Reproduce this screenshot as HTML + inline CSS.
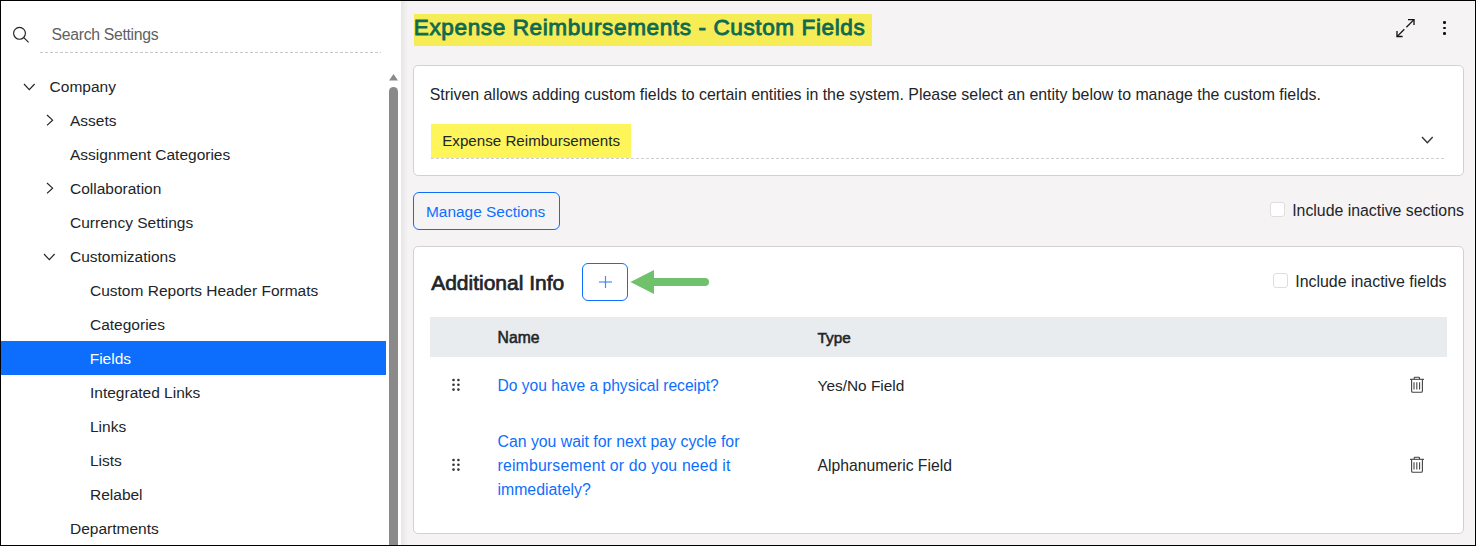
<!DOCTYPE html>
<html><head><meta charset="utf-8"><style>
html,body{margin:0;padding:0;}
body{width:1476px;height:546px;overflow:hidden;background:#000;position:relative;font-family:"Liberation Sans", sans-serif;}
.t{position:absolute;white-space:nowrap;font-family:"Liberation Sans", sans-serif;}
</style></head><body>
<div style="position:absolute;left:1px;top:1px;width:400px;height:544px;background:#fff"></div>
<svg style="position:absolute;left:0;top:0" width="40" height="50"><circle cx="19.5" cy="33.3" r="5.9" fill="none" stroke="#222" stroke-width="1.15"/><line x1="23.8" y1="37.6" x2="28.6" y2="42.4" stroke="#222" stroke-width="1.15"/></svg>
<div class="t" style="left:51.58px;top:26.53px;font-size:15.8px;line-height:15.8px;color:#5f5f5f;font-weight:400;letter-spacing:-0.32px">Search Settings</div>
<div style="position:absolute;left:40px;top:52px;width:341px;height:1px;background:repeating-linear-gradient(90deg,#c8c8c8 0 3px,transparent 3px 5px)"></div>
<svg style="position:absolute;left:21.90px;top:81.60px" width="14.6" height="9.6"><polyline points="2,2 7.3,7.6 12.6,2" fill="none" stroke="#222" stroke-width="1.15"/></svg>
<div class="t" style="left:49.60px;top:78.69px;font-size:15.5px;line-height:15.5px;color:#212529;font-weight:400;">Company</div>
<svg style="position:absolute;left:45.10px;top:112.90px" width="9.6" height="14.4"><polyline points="2,2 7.6,7.2 2,12.4" fill="none" stroke="#222" stroke-width="1.15"/></svg>
<div class="t" style="left:70.00px;top:112.69px;font-size:15.5px;line-height:15.5px;color:#212529;font-weight:400;">Assets</div>
<div class="t" style="left:70.00px;top:146.69px;font-size:15.5px;line-height:15.5px;color:#212529;font-weight:400;">Assignment Categories</div>
<svg style="position:absolute;left:45.10px;top:180.90px" width="9.6" height="14.4"><polyline points="2,2 7.6,7.2 2,12.4" fill="none" stroke="#222" stroke-width="1.15"/></svg>
<div class="t" style="left:70.00px;top:180.69px;font-size:15.5px;line-height:15.5px;color:#212529;font-weight:400;">Collaboration</div>
<div class="t" style="left:70.00px;top:214.69px;font-size:15.5px;line-height:15.5px;color:#212529;font-weight:400;">Currency Settings</div>
<svg style="position:absolute;left:41.90px;top:251.80px" width="14.6" height="9.6"><polyline points="2,2 7.3,7.6 12.6,2" fill="none" stroke="#222" stroke-width="1.15"/></svg>
<div class="t" style="left:70.00px;top:248.69px;font-size:15.5px;line-height:15.5px;color:#212529;font-weight:400;">Customizations</div>
<div class="t" style="left:90.00px;top:282.69px;font-size:15.5px;line-height:15.5px;color:#212529;font-weight:400;">Custom Reports Header Formats</div>
<div class="t" style="left:90.00px;top:316.69px;font-size:15.5px;line-height:15.5px;color:#212529;font-weight:400;">Categories</div>
<div style="position:absolute;left:1px;top:341px;width:385px;height:34px;background:#0d6efd"></div>
<div class="t" style="left:89.70px;top:350.69px;font-size:15.5px;line-height:15.5px;color:#fff;font-weight:400;">Fields</div>
<div class="t" style="left:90.00px;top:384.69px;font-size:15.5px;line-height:15.5px;color:#212529;font-weight:400;">Integrated Links</div>
<div class="t" style="left:90.00px;top:418.69px;font-size:15.5px;line-height:15.5px;color:#212529;font-weight:400;">Links</div>
<div class="t" style="left:90.00px;top:452.69px;font-size:15.5px;line-height:15.5px;color:#212529;font-weight:400;">Lists</div>
<div class="t" style="left:90.00px;top:486.69px;font-size:15.5px;line-height:15.5px;color:#212529;font-weight:400;">Relabel</div>
<div class="t" style="left:70.00px;top:520.69px;font-size:15.5px;line-height:15.5px;color:#212529;font-weight:400;">Departments</div>
<svg style="position:absolute;left:385px;top:70px" width="16" height="20"><polygon points="4,10.5 13,10.5 8.5,4" fill="#8a8a8a"/></svg>
<div style="position:absolute;left:389px;top:87px;width:9px;height:458px;background:#8a8a8a;border-radius:4.5px 4.5px 0 0"></div>
<div style="position:absolute;left:401px;top:1px;width:1074px;height:544px;background:#f5f3f4"></div>
<div style="position:absolute;left:401px;top:1px;width:7px;height:544px;background:linear-gradient(90deg,#e7e5e6,#f5f3f4)"></div>
<div style="position:absolute;left:414px;top:14px;width:458px;height:32px;background:#f6ec56"></div>
<div class="t" style="left:413.84px;top:16.88px;font-size:22.6px;line-height:22.6px;color:#0e6a50;font-weight:400;-webkit-text-stroke:0.85px #0e6a50;letter-spacing:0.58px">Expense Reimbursements - Custom Fields</div>
<svg style="position:absolute;left:1392px;top:15px" width="28" height="26"><g fill="none" stroke="#111" stroke-width="1.3"><path d="M16 4.6 H22 V9.9"/><path d="M22 4.6 L14.4 12.2"/><path d="M12.3 14.3 L5 21.6"/><path d="M5 16.1 V21.5 H10.6"/></g></svg>
<div style="position:absolute;left:1443.1px;top:21.3px;width:2.6px;height:2.6px;border-radius:50%;background:#111"></div>
<div style="position:absolute;left:1443.1px;top:26.7px;width:2.6px;height:2.6px;border-radius:50%;background:#111"></div>
<div style="position:absolute;left:1443.1px;top:32.3px;width:2.6px;height:2.6px;border-radius:50%;background:#111"></div>
<div style="position:absolute;left:413px;top:65px;width:1051px;height:111px;background:#fff;border:1px solid #d2d2d2;border-radius:5px;box-sizing:border-box"></div>
<div class="t" style="left:429.67px;top:86.65px;font-size:15.9px;line-height:15.9px;color:#212529;font-weight:400;">Striven allows adding custom fields to certain entities in the system. Please select an entity below to manage the custom fields.</div>
<div style="position:absolute;left:431px;top:124px;width:200px;height:34px;background:#fef55a"></div>
<div class="t" style="left:442.22px;top:133.17px;font-size:15.16px;line-height:15.16px;color:#212529;font-weight:400;">Expense Reimbursements</div>
<div style="position:absolute;left:431px;top:158px;width:1015px;height:1px;background:repeating-linear-gradient(90deg,#cfcfcf 0 3px,transparent 3px 5px)"></div>
<svg style="position:absolute;left:1419.65px;top:134.90px" width="14.7" height="9.8"><polyline points="2,2 7.35,7.8 12.7,2" fill="none" stroke="#333" stroke-width="1.4"/></svg>
<div style="position:absolute;left:413px;top:192px;width:147px;height:38px;border:1px solid #0d6efd;border-radius:6px;box-sizing:border-box"></div>
<div class="t" style="left:426.00px;top:203.73px;font-size:15.45px;line-height:15.45px;color:#0d6efd;font-weight:400;">Manage Sections</div>
<div style="position:absolute;left:1270px;top:202px;width:15px;height:15px;background:#fff;border:1px solid #dedede;border-radius:3px;box-sizing:border-box"></div>
<div class="t" style="left:1292.18px;top:202.59px;font-size:15.85px;line-height:15.85px;color:#212529;font-weight:400;">Include inactive sections</div>
<div style="position:absolute;left:413px;top:246px;width:1051px;height:288px;background:#fff;border:1px solid #d2d2d2;border-radius:5px;box-sizing:border-box"></div>
<div class="t" style="left:431.15px;top:271.83px;font-size:21px;line-height:21px;color:#212529;font-weight:400;-webkit-text-stroke:0.7px #212529">Additional Info</div>
<div style="position:absolute;left:582px;top:263px;width:46px;height:38px;border:1px solid #0d6efd;border-radius:6px;box-sizing:border-box"></div>
<svg style="position:absolute;left:596px;top:273px" width="19" height="18"><g stroke="#4a8af7" stroke-width="1.2"><line x1="3" y1="9" x2="16" y2="9"/><line x1="9.5" y1="3" x2="9.5" y2="15"/></g></svg>
<svg style="position:absolute;left:620px;top:260px" width="100" height="40"><polygon points="10.4,22 34,10 34,34" fill="#70c16b"/><line x1="33" y1="22.1" x2="85" y2="22.1" stroke="#70c16b" stroke-width="8" stroke-linecap="round"/></svg>
<div style="position:absolute;left:1273px;top:273px;width:15px;height:15px;background:#fff;border:1px solid #dedede;border-radius:3px;box-sizing:border-box"></div>
<div class="t" style="left:1295.27px;top:273.53px;font-size:15.92px;line-height:15.92px;color:#212529;font-weight:400;">Include inactive fields</div>
<div style="position:absolute;left:430px;top:317px;width:1017px;height:40px;background:#e9ecef"></div>
<div class="t" style="left:497.59px;top:329.92px;font-size:15.7px;line-height:15.7px;color:#212529;font-weight:400;-webkit-text-stroke:0.55px #212529">Name</div>
<div class="t" style="left:817.61px;top:330.26px;font-size:15.3px;line-height:15.3px;color:#212529;font-weight:400;-webkit-text-stroke:0.55px #212529">Type</div>
<svg style="position:absolute;left:449px;top:376.90px" width="14" height="16"><g fill="#333"><circle cx="4.5" cy="3" r="1.3"/><circle cx="4.5" cy="7.8" r="1.3"/><circle cx="4.5" cy="12.6" r="1.3"/><circle cx="9.4" cy="3" r="1.3"/><circle cx="9.4" cy="7.8" r="1.3"/><circle cx="9.4" cy="12.6" r="1.3"/></g></svg>
<div class="t" style="left:497.49px;top:377.99px;font-size:15.61px;line-height:15.61px;color:#0d6efd;font-weight:400;">Do you have a physical receipt?</div>
<div class="t" style="left:817.61px;top:378.18px;font-size:15.39px;line-height:15.39px;color:#212529;font-weight:400;">Yes/No Field</div>
<svg style="position:absolute;left:1409px;top:376px" width="16" height="18" viewBox="0 0 16 18"><g fill="none" stroke="#444" stroke-width="1.1"><line x1="1" y1="3.3" x2="15" y2="3.3"/><path d="M5.2 3.2 V2 Q5.2 1.2 6 1.2 H9.7 Q10.5 1.2 10.5 2 V3.2"/><path d="M2.6 3.3 V15 Q2.6 16.3 3.9 16.3 H12.1 Q13.4 16.3 13.4 15 V3.3"/><line x1="5" y1="6.2" x2="5" y2="13.5"/><line x1="7.8" y1="6.2" x2="7.8" y2="13.5"/><line x1="10.6" y1="6.2" x2="10.6" y2="13.5"/></g></svg>
<svg style="position:absolute;left:449px;top:456.90px" width="14" height="16"><g fill="#333"><circle cx="4.5" cy="3" r="1.3"/><circle cx="4.5" cy="7.8" r="1.3"/><circle cx="4.5" cy="12.6" r="1.3"/><circle cx="9.4" cy="3" r="1.3"/><circle cx="9.4" cy="7.8" r="1.3"/><circle cx="9.4" cy="12.6" r="1.3"/></g></svg>
<div class="t" style="left:497.48px;top:434.21px;font-size:15.83px;line-height:15.83px;color:#0d6efd;font-weight:400;letter-spacing:0px">Can you wait for next pay cycle for</div>
<div class="t" style="left:497.48px;top:458.21px;font-size:15.83px;line-height:15.83px;color:#0d6efd;font-weight:400;letter-spacing:0.17px">reimbursement or do you need it</div>
<div class="t" style="left:497.48px;top:482.21px;font-size:15.83px;line-height:15.83px;color:#0d6efd;font-weight:400;letter-spacing:0px">immediately?</div>
<div class="t" style="left:817.59px;top:457.92px;font-size:15.7px;line-height:15.7px;color:#212529;font-weight:400;">Alphanumeric Field</div>
<svg style="position:absolute;left:1409px;top:456px" width="16" height="18" viewBox="0 0 16 18"><g fill="none" stroke="#444" stroke-width="1.1"><line x1="1" y1="3.3" x2="15" y2="3.3"/><path d="M5.2 3.2 V2 Q5.2 1.2 6 1.2 H9.7 Q10.5 1.2 10.5 2 V3.2"/><path d="M2.6 3.3 V15 Q2.6 16.3 3.9 16.3 H12.1 Q13.4 16.3 13.4 15 V3.3"/><line x1="5" y1="6.2" x2="5" y2="13.5"/><line x1="7.8" y1="6.2" x2="7.8" y2="13.5"/><line x1="10.6" y1="6.2" x2="10.6" y2="13.5"/></g></svg>
</body></html>
